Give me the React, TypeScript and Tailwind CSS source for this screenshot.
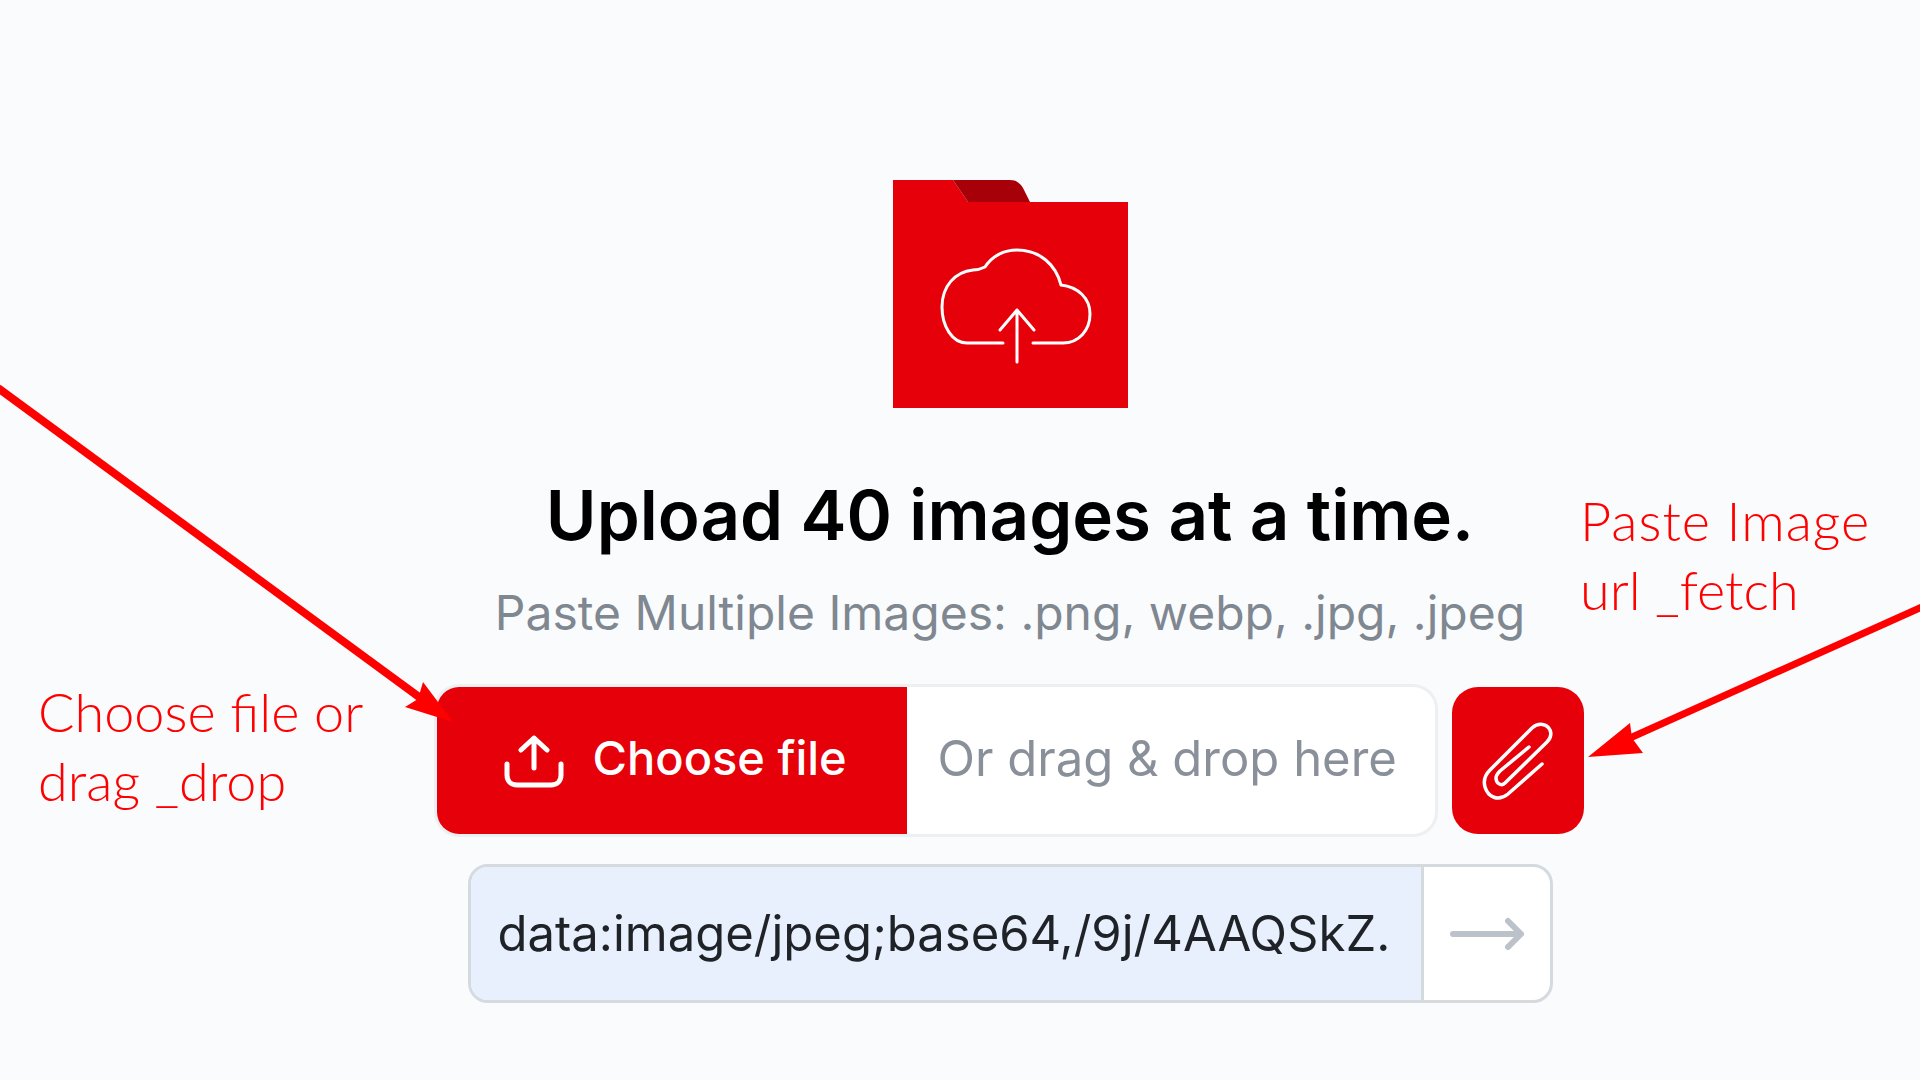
function FolderIcon() {
  return (
    <svg width="235" height="228" viewBox="0 0 235 228" fill="none">
      <path d="M0 0H60L75 22H235V228H0Z" fill="#e60009" />
      <path d="M60 0H117C123 0 127 3 130 8L137 22H75Z" fill="#a80008" />
      <path
        d="M110 163H74C59 163 49 146 49 127C49 106 62 92 80 90C84 90 88 89 92 87C99 76 111 70 124 70C147 70 163 85 168 105C185 107 197 118 197 134C197 150 186 163 170 163H140"
        stroke="#fff"
        strokeWidth="3"
        strokeLinecap="round"
      />
      <path d="M124 130V182M107 150L124 130L141 150" stroke="#fff" strokeWidth="3" strokeLinecap="round" strokeLinejoin="round" />
    </svg>
  )
}

function UploadIcon() {
  return (
    <svg className="shrink-0" width="60" height="54" viewBox="0 0 60 54" fill="none" stroke="#fff" strokeWidth="5" strokeLinecap="round" strokeLinejoin="round">
      <path d="M30 4V34M17 16L30 4L43 16" />
      <path d="M3 30V41C3 47 7 51 13 51H47C53 51 57 47 57 41V30" />
    </svg>
  )
}

function ClipIcon() {
  return (
    <svg width="132" height="147" viewBox="0 0 132 147" fill="none" stroke="#fff" strokeWidth="3.5" strokeLinecap="round">
      <path d="M90 77L56 107C46 115 36 110 33 100C31 93 33 88 38 83L80 41C87 35 95 37 98 43C100 48 98 52 95 55L53 96C49 100 44 96 44 91C44 88 46 86 48 84L77 60" />
    </svg>
  )
}

function Arrows() {
  return (
    <svg className="pointer-events-none absolute inset-0" width="1920" height="1080" viewBox="0 0 1920 1080" fill="none">
      <path d="M-2 388L430 705" stroke="#ff0000" strokeWidth="8" />
      <path d="M453 722L405 707L418 699L423 682Z" fill="#ff0000" />
      <path d="M1922 607L1630 738" stroke="#ff0000" strokeWidth="7" />
      <path d="M1588 757L1630 723L1632 738L1643 753Z" fill="#ff0000" />
    </svg>
  )
}

export default function App() {
  return (
    <div className="relative h-[1080px] w-[1920px] overflow-hidden bg-[#f9fbfd] font-['Inter',sans-serif]">
      <div className="flex flex-col items-center pl-[100px] pt-[180px]">
        <FolderIcon />
        <h1 className="mt-[67px] text-[69px] leading-[80px] font-semibold whitespace-nowrap text-black">Upload 40 images at a time.</h1>
        <p className="mt-[28px] text-[48px] leading-[60px] whitespace-nowrap text-[#7f8790]">Paste Multiple Images: .png, webp, .jpg, .jpeg</p>

        <div className="mt-[44px] flex w-[1147px] items-center gap-[17px]">
          <div className="flex h-[147px] w-[998px] overflow-hidden rounded-[22px] bg-white ring-[3px] ring-[#edf0f3]">
            <div className="flex w-[470px] shrink-0 items-center gap-[29px] bg-[#e60009] pl-[67px] text-[47px] font-medium whitespace-nowrap text-white">
              <UploadIcon />
              <span className="pb-[4px]">Choose file</span>
            </div>
            <div className="flex flex-1 items-center pb-[4px] pl-[31px] text-[49px] whitespace-nowrap text-[#8a9099]">Or drag &amp; drop here</div>
          </div>
          <div className="flex h-[147px] w-[132px] items-center justify-center rounded-[26px] bg-[#e60009]">
            <ClipIcon />
          </div>
        </div>

        <div className="mt-[30px] flex h-[139px] w-[1085px] overflow-hidden rounded-[20px] border-[3px] border-[#d5dade] bg-white">
          <div className="flex flex-1 items-center overflow-hidden border-r-[3px] border-[#d5dade] bg-[#e8f0fe] pl-[27px] text-[49px] whitespace-nowrap text-[#1f2328]">
            data:image/jpeg;base64,/9j/4AAQSkZ.
          </div>
          <div className="flex w-[126px] items-center justify-center">
            <svg width="74" height="36" viewBox="0 0 74 36" fill="none" stroke="#bcc2c9" strokeWidth="6" strokeLinecap="round" strokeLinejoin="round">
              <path d="M3 18H70M58 5L71 18L58 31" />
            </svg>
          </div>
        </div>
      </div>

      <Arrows />

      <div className="absolute top-[677px] left-[38px] font-['Lato',sans-serif] text-[54px] leading-[69px] font-light text-[#ff0000]">
        Choose file or
        <br />
        drag _drop
      </div>
      <div className="absolute top-[486px] left-[1580px] font-['Lato',sans-serif] text-[54px] leading-[69px] font-light text-[#ff0000]">
        <span className="tracking-[1px]">Paste Image</span>
        <br />
        url _fetch
      </div>
    </div>
  )
}
